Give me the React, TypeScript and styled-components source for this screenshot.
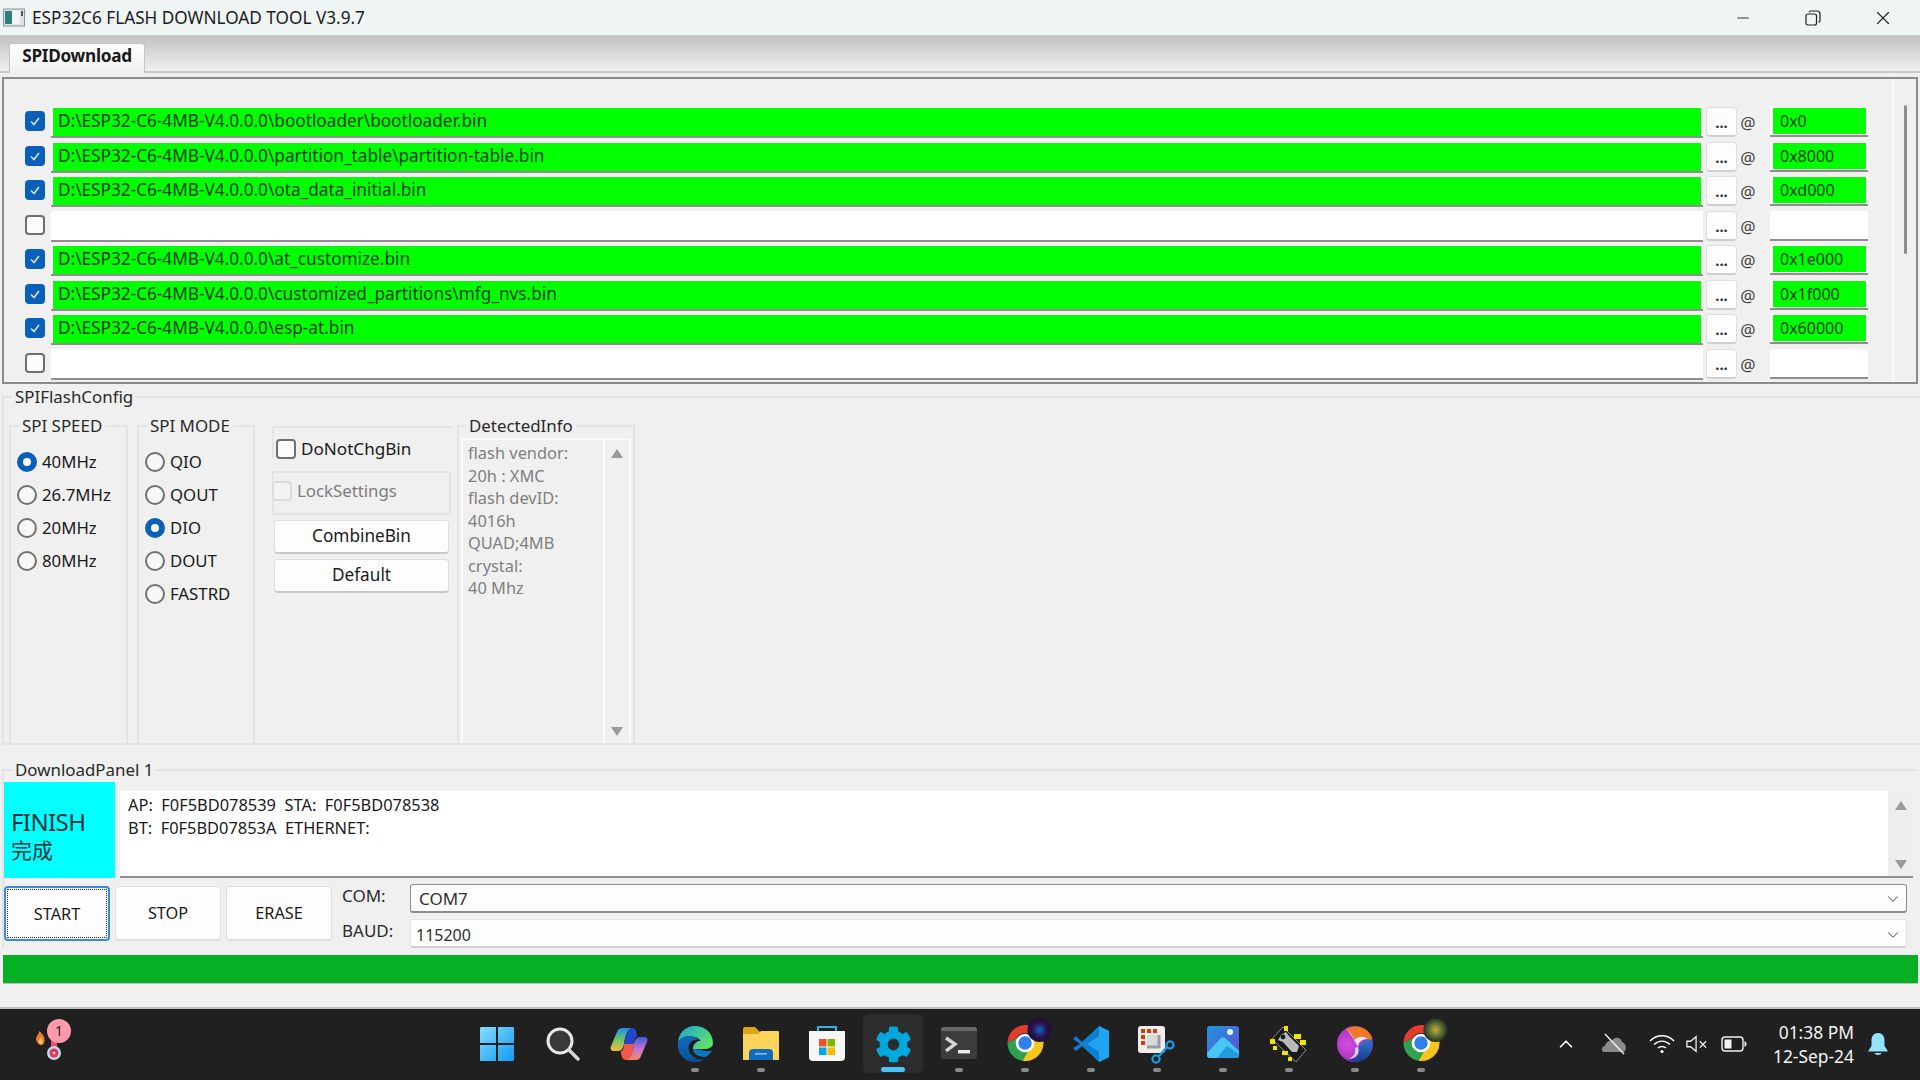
import React from "react";
import styled, { createGlobalStyle } from "styled-components";
import { ChevronDown, ChevronUp, Minus, X } from "lucide-react";
import { FaCog } from "react-icons/fa";

const UI_FONT = `"Noto Sans", "Noto Sans CJK SC", sans-serif`;

const GlobalStyle = createGlobalStyle`
  html, body { margin: 0; padding: 0; background: #f0f0f0; }
  * { box-sizing: border-box; }
  body { font-family: ${UI_FONT}; color: #1a1a1a; }
`;

const Screen = styled.div`
  width: 1920px;
  height: 1080px;
  display: flex;
  flex-direction: column;
  overflow: hidden;
`;

const Window = styled.div`
  height: 1009px;
  display: flex;
  flex-direction: column;
  background: #f0f0f0;
  border-bottom: 2px solid #bdbdbd;
`;

const TitleBar = styled.div`
  height: 36px;
  flex: none;
  display: flex;
  align-items: center;
  padding-left: 3px;
  background: #eff4f4;
  border-bottom: 1px solid #c9c9c9;
`;

const Title = styled.span`
  margin-left: 7px;
  font-size: 17.2px;
  color: #1c1c1c;
  white-space: nowrap;
`;

const WinControls = styled.div`
  margin-left: auto;
  margin-right: 2px;
  display: flex;
  height: 100%;
`;

const WinControl = styled.div`
  width: 70px;
  display: flex;
  align-items: center;
  justify-content: center;
  color: #222;
`;

const TabStrip = styled.div`
  height: 37px;
  flex: none;
  margin-bottom: 4px;
  padding-left: 9px;
  display: flex;
  align-items: flex-end;
  background: linear-gradient(#c2c2c2, #f0f0f0);
  border-bottom: 2px solid #c8c8c8;
`;

const Tab = styled.div`
  width: 136px;
  height: 30px;
  margin-bottom: -2px;
  background: linear-gradient(#ffffff, #f1f1f1);
  border: 1px solid #c4c4c4;
  border-bottom: none;
  border-radius: 3px 3px 0 0;
  font-size: 17.2px;
  font-weight: 700;
  text-align: center;
  line-height: 24px;
  letter-spacing: -0.3px;
`;

const FilePanel = styled.div`
  height: 307px;
  flex: none;
  margin: 0 2px 0 2px;
  display: flex;
  background: #f0f0f0;
  border: 2px solid #8c8c8c;
  overflow: hidden;
`;

const FileRows = styled.div`
  flex: 1;
  min-width: 0;
  padding: 28px 0 0 21px;
`;

const FileRow = styled.div`
  height: 34.5px;
  display: flex;
  align-items: flex-start;
`;

const CheckBox = styled.span<{ $checked?: boolean; $disabled?: boolean }>`
  flex: none;
  width: 20px;
  height: 20px;
  display: flex;
  align-items: center;
  justify-content: center;
  border-radius: 4px;
  background: ${(p) => (p.$checked ? "#0a5fb8" : p.$disabled ? "#f3f3f3" : "#fbfbfb")};
  border: 2px solid ${(p) => (p.$checked ? "#0a5fb8" : p.$disabled ? "#dcdcdc" : "#6f6f6f")};
`;

const RowCheck = styled(CheckBox)`
  margin-top: 4px;
`;

const PathField = styled.div`
  width: 1652px;
  height: 31px;
  margin-left: 6px;
  padding: 1px 2px 0 2px;
  background: #ffffff;
  border-bottom: 2px solid #8e8e8e;
`;

const FieldFill = styled.div<{ $ok?: boolean }>`
  height: 28px;
  padding-left: 5px;
  background: ${(p) => (p.$ok ? "#00ff00" : "#ffffff")};
  font-size: 17.2px;
  line-height: 25px;
  color: #0d3d0d;
  white-space: nowrap;
`;

const DotsButton = styled.div`
  width: 31px;
  height: 30px;
  flex: none;
  margin-left: 3px;
  background: #fdfdfd;
  border: 1px solid #dedede;
  border-bottom: 2px solid #cfcfcf;
  border-radius: 4px;
  text-align: center;
  font-size: 15px;
  font-weight: 700;
  line-height: 29px;
  color: #333;
`;

const AtSign = styled.span`
  width: 22px;
  flex: none;
  padding-top: 4px;
  text-align: center;
  font-size: 17px;
  line-height: 24px;
  color: #444;
`;

const OffsetField = styled.div`
  width: 98px;
  height: 30px;
  margin-left: 11px;
  padding: 1px 2px 0 3px;
  background: #fff;
  border-bottom: 2px solid #8e8e8e;
`;

const OffsetFill = styled.div<{ $ok?: boolean }>`
  height: 26px;
  padding-left: 7px;
  background: ${(p) => (p.$ok ? "#00ff00" : "#ffffff")};
  font-size: 16px;
  line-height: 26px;
  color: #0d3d0d;
`;

const PanelScroll = styled.div`
  width: 24px;
  flex: none;
  border-left: 2px solid #fbfbfb;
  display: flex;
  justify-content: center;
`;

const PanelThumb = styled.div`
  width: 3px;
  height: 149px;
  margin-top: 26px;
  background: #8e8e8e;
  border-radius: 2px;
`;

const Group = styled.fieldset`
  margin: 0;
  padding: 0;
  min-width: 0;
  border: 2px solid #e4e4e4;
`;

const Legend = styled.legend<{ $indent?: number }>`
  margin-left: ${(p) => p.$indent ?? 8}px;
  padding: 0 3px;
  font-size: 16.9px;
  line-height: 24px;
  color: #2a2a2a;
  white-space: nowrap;
`;

const ConfigGroup = styled(Group)`
  height: 360px;
  flex: none;
  margin: 1px 0 0 2px;
  border-right: none;
`;

const ConfigBody = styled.div`
  display: flex;
  align-items: flex-start;
  padding: 5px 0 0 5px;
`;

const OptionGroup = styled(Group)<{ $w: number; $mr: number }>`
  width: ${(p) => p.$w}px;
  height: 329px;
  margin-right: ${(p) => p.$mr}px;
  flex: none;
  border-bottom: none;
  padding: 7px 0 0 6px;
`;

const RadioRow = styled.div`
  height: 33px;
  display: flex;
  align-items: center;
  gap: 5px;
  font-size: 16.8px;
`;

const Radio = styled.span<{ $on?: boolean }>`
  width: 20px;
  height: 20px;
  flex: none;
  border-radius: 50%;
  background: #f8f8f8;
  border: ${(p) => (p.$on ? "6px solid #0a5fb8" : "2px solid #707070")};
`;

const ActionColumn = styled.div`
  width: 179px;
  height: 329px;
  flex: none;
  margin: 12px 6px 0 0;
`;

const ChgFrame = styled.div`
  height: 32px;
  padding: 11px 0 0 2px;
  display: flex;
  align-items: flex-start;
  gap: 5px;
  border-top: 2px solid #e4e4e4;
  border-left: 2px solid #e4e4e4;
  font-size: 17.1px;
  line-height: 20px;
`;

const LockFrame = styled.div`
  height: 44px;
  margin-top: 13px;
  display: flex;
  align-items: center;
  gap: 5px;
  padding-bottom: 5px;
  border: 2px solid #e4e4e4;
  font-size: 16.8px;
  color: #7d7d7d;
`;

const LockCheck = styled(CheckBox)`
  margin-left: -2px;
`;

const WideButton = styled.div`
  width: 175px;
  height: 34px;
  margin: 5px 0 0 2px;
  background: #fdfdfd;
  border: 1px solid #dedede;
  border-bottom: 2px solid #c8c8c8;
  border-radius: 4px;
  text-align: center;
  font-size: 17.2px;
  line-height: 30px;
`;

const DetectedGroup = styled(Group)`
  width: 178px;
  height: 329px;
  flex: none;
  border-bottom: none;
  padding: 0 2px;
`;

const DetectedBox = styled.div`
  height: 305px;
  display: flex;
  border: 2px solid #fafafa;
  border-bottom: none;
`;

const DetectedText = styled.div`
  flex: 1;
  padding: 2px 0 0 5px;
  font-size: 16.4px;
  line-height: 22.5px;
  color: #7f7f7f;
  white-space: pre;
`;

const ScrollColumn = styled.div<{ $w: number; $top: number; $bottom: number }>`
  width: ${(p) => p.$w}px;
  flex: none;
  padding: ${(p) => p.$top}px 0 ${(p) => p.$bottom}px;
  display: flex;
  flex-direction: column;
  align-items: center;
  justify-content: space-between;
  background: #eeeeee;
`;

const DetectedScroll = styled(ScrollColumn)`
  border-left: 2px solid #fafafa;
  background: #f0f0f0;
`;

const Arrow = styled.span<{ $down?: boolean }>`
  width: 0;
  height: 0;
  border-left: 6px solid transparent;
  border-right: 6px solid transparent;
  ${(p) =>
    p.$down ? "border-top: 9px solid #9a9a9a;" : "border-bottom: 9px solid #9a9a9a;"}
`;

const DownloadGroup = styled(Group)`
  height: 189px;
  flex: none;
  margin: 13px 3px 0 2px;
  border-width: 2px 0 0 2px;
`;

const StatusRow = styled.div`
  display: flex;
  height: 96px;
`;

const StatusCell = styled.div`
  width: 111px;
  flex: none;
  padding: 24px 0 0 7px;
  background: #00ffff;
  color: #16333a;
`;

const StatusEn = styled.div`
  font-size: 24px;
  line-height: 31px;
  letter-spacing: -0.6px;
`;

const StatusCn = styled.div`
  font-size: 21px;
  line-height: 27px;
`;

const LogBox = styled.div`
  flex: 1;
  margin: 9px 4px 0 5px;
  display: flex;
  background: #fff;
  border-bottom: 2px solid #8e8e8e;
`;

const LogText = styled.div`
  flex: 1;
  padding: 3px 0 0 8px;
  font-size: 16.4px;
  line-height: 22.5px;
  white-space: pre;
`;

const ControlRow = styled.div`
  display: flex;
  margin-top: 6px;
  height: 63px;
`;

const BigButton = styled.div<{ $focus?: boolean }>`
  width: 106px;
  height: 55px;
  margin: 2px 5px 0 0;
  background: #fdfdfd;
  border: ${(p) => (p.$focus ? "2px solid #3b8ad9" : "1px solid #dedede")};
  border-bottom-width: 2px;
  border-radius: 4px;
  display: flex;
  align-items: center;
  justify-content: center;
  font-size: 16.3px;
  ${(p) => (p.$focus ? "outline: 1.5px dotted #333; outline-offset: -4px;" : "")}
`;

const PortLabels = styled.div`
  width: 68px;
  flex: none;
  margin-left: 5px;
  margin-top: -6px;
  font-size: 17px;
  line-height: 35px;
  color: #2a2a2a;
`;

const PortSelects = styled.div`
  width: 1497px;
  flex: none;
`;

const Select = styled.div<{ $focus?: boolean }>`
  height: 29px;
  margin-bottom: 6px;
  padding: ${(p) => (p.$focus ? 1 : 3)}px 4px 0 ${(p) => (p.$focus ? 8 : 5)}px;
  display: flex;
  align-items: center;
  justify-content: space-between;
  background: #fdfdfd;
  border: 1px solid ${(p) => (p.$focus ? "#8c8c8c" : "#e2e2e2")};
  border-bottom: 2px solid ${(p) => (p.$focus ? "#8c8c8c" : "#cfcfcf")};
  border-radius: 3px;
  font-size: ${(p) => (p.$focus ? 17 : 16)}px;
  color: #303030;
`;

const Progress = styled.div`
  height: 29px;
  flex: none;
  margin: 8px 2px 0 3px;
  background: #05b025;
  border-bottom: 1px solid #bdbdbd;
`;

const TaskBar = styled.div`
  height: 71px;
  flex: none;
  display: flex;
  align-items: flex-start;
  padding-top: 5px;
  background: #202020;
`;

const Widget = styled.div`
  width: 464px;
  flex: none;
  padding: 8px 0 0 32px;
`;

const WidgetIcon = styled.div`
  position: relative;
  width: 40px;
  height: 42px;
`;

const WidgetBadge = styled.span`
  position: absolute;
  left: 15px;
  top: -3px;
  width: 24px;
  height: 24px;
  border-radius: 50%;
  background: #ff9aa8;
  color: #222;
  font-size: 14px;
  line-height: 24px;
  text-align: center;
`;

const TaskSlot = styled.div`
  width: 66px;
  height: 59px;
  flex: none;
  display: flex;
  justify-content: center;
`;

const TaskTile = styled.div<{ $active?: boolean }>`
  width: 60px;
  height: 59px;
  padding-top: 12px;
  display: flex;
  flex-direction: column;
  align-items: center;
  border-radius: 6px;
  background: ${(p) => (p.$active ? "#2c2c2c" : "transparent")};
`;

const Pill = styled.span<{ $kind: "none" | "open" | "active" }>`
  margin-top: auto;
  margin-bottom: 1px;
  height: ${(p) => (p.$kind === "active" ? 5 : 4)}px;
  width: ${(p) => (p.$kind === "active" ? 24 : 8)}px;
  border-radius: 3px;
  background: ${(p) =>
    p.$kind === "active" ? "#4cc2ff" : p.$kind === "open" ? "#8a8a8a" : "transparent"};
`;

const Tray = styled.div`
  display: flex;
  align-items: center;
  height: 59px;
  margin-left: 88px;
  color: #fff;
`;

const TraySlot = styled.div<{ $w: number }>`
  width: ${(p) => p.$w}px;
  display: flex;
  justify-content: center;
  align-items: center;
`;

const Clock = styled.div`
  width: 94px;
  text-align: right;
  font-size: 17.4px;
  line-height: 24px;
  color: #f4f4f4;
  white-space: nowrap;
`;

const files = [
  { path: "D:\\ESP32-C6-4MB-V4.0.0.0\\bootloader\\bootloader.bin", addr: "0x0" },
  { path: "D:\\ESP32-C6-4MB-V4.0.0.0\\partition_table\\partition-table.bin", addr: "0x8000" },
  { path: "D:\\ESP32-C6-4MB-V4.0.0.0\\ota_data_initial.bin", addr: "0xd000" },
  { path: "", addr: "" },
  { path: "D:\\ESP32-C6-4MB-V4.0.0.0\\at_customize.bin", addr: "0x1e000" },
  { path: "D:\\ESP32-C6-4MB-V4.0.0.0\\customized_partitions\\mfg_nvs.bin", addr: "0x1f000" },
  { path: "D:\\ESP32-C6-4MB-V4.0.0.0\\esp-at.bin", addr: "0x60000" },
  { path: "", addr: "" },
];

const speeds = ["40MHz", "26.7MHz", "20MHz", "80MHz"];
const modes = ["QIO", "QOUT", "DIO", "DOUT", "FASTRD"];

const Tick = () => (
  <svg width="12" height="12" viewBox="0 0 12 12">
    <path d="M2 6.5 L5 9.5 L10 3" fill="none" stroke="#d8e8f8" strokeWidth="1.5" />
  </svg>
);

const AppIcon = () => (
  <svg width="22" height="20" viewBox="0 0 22 20">
    <rect x="0.5" y="1" width="21" height="17" fill="#dfe3e6" stroke="#8d9499" />
    <rect x="2" y="3" width="7" height="13" fill="#2d7f7a" />
    <rect x="9" y="3" width="8" height="13" fill="#f5f5f5" />
    <rect x="18" y="3" width="2" height="5" fill="#555" />
  </svg>
);

const RestoreIcon = () => (
  <svg width="16" height="16" viewBox="0 0 16 16" fill="none" stroke="#222" strokeWidth="1.2">
    <rect x="1" y="4" width="10.5" height="11" rx="2" />
    <path d="M4 2.2 C4.5 1.2 5 1 6 1 H12 C14 1 15 2 15 4 V10.5 C15 11.5 14.5 12 13.5 12.4" />
  </svg>
);

const ThermoIcon = () => (
  <svg width="40" height="42" viewBox="0 0 40 42">
    <path d="M5 20 C2 15 7 13 7 9 C11 12 14 16 12 21 C11 24 7 24 5 20Z" fill="#ef7a22" />
    <path d="M7 21 C6 18 8 17 9 15 C11 18 11 22 9 22Z" fill="#ffc36b" />
    <rect x="19" y="10" width="6" height="20" fill="#f04e6a" />
    <circle cx="22" cy="31" r="7" fill="#b6dcf6" />
    <circle cx="22" cy="31" r="4.5" fill="#e8334f" />
    <circle cx="22" cy="31" r="1.5" fill="#ffd5dc" />
  </svg>
);

const StartIcon = () => (
  <svg width="36" height="36" viewBox="0 0 36 36">
    <defs>
      <linearGradient id="st" x1="0" y1="0" x2="1" y2="1">
        <stop offset="0" stopColor="#86dcff" />
        <stop offset="1" stopColor="#0f9bf5" />
      </linearGradient>
    </defs>
    <path d="M2 1 H17 V17 H1 V2 Z M19 1 H34 Q35 1 35 2 V17 H19 Z M1 19 H17 V35 H2 Q1 35 1 34 Z M19 19 H35 V34 Q35 35 34 35 H19 Z" fill="url(#st)" />
  </svg>
);

const SearchIcon = () => (
  <svg width="36" height="36" viewBox="0 0 36 36">
    <circle cx="15" cy="15" r="12" fill="#3a3a3a" stroke="#e8e8e8" strokeWidth="3" />
    <path d="M24 24 L33 33" stroke="#d8d8d8" strokeWidth="3.4" strokeLinecap="round" />
  </svg>
);

const CopilotIcon = () => (
  <svg width="38" height="36" viewBox="0 0 38 36">
    <defs>
      <linearGradient id="co1" x1="0" y1="0" x2="0" y2="1">
        <stop offset="0" stopColor="#1c8df0" />
        <stop offset="0.5" stopColor="#6fc66a" />
        <stop offset="1" stopColor="#f5b83c" />
      </linearGradient>
      <linearGradient id="co2" x1="0" y1="0" x2="0" y2="1">
        <stop offset="0" stopColor="#3a5fe0" />
        <stop offset="0.5" stopColor="#c66fd6" />
        <stop offset="1" stopColor="#f28a5c" />
      </linearGradient>
    </defs>
    <path d="M12 2 H22 C17 4 15 10 14 18 C13 22 12 25 8 25 H4 C1 25 0 23 1 20 L7 6 C8 3 10 2 12 2Z" fill="url(#co1)" />
    <path d="M26 34 H16 C21 32 23 26 24 18 C25 14 26 11 30 11 H34 C37 11 38 13 37 16 L31 30 C30 33 28 34 26 34Z" fill="url(#co2)" />
    <path d="M22 2 C25 2 27 5 27 11 C25 11 24 14 24 18 L14 18 C15 10 17 4 22 2Z" fill="#2248c8" />
    <path d="M16 34 C13 34 11 31 11 25 C13 25 14 22 14 18 L24 18 C23 26 21 32 16 34Z" fill="#ef5a4a" />
  </svg>
);

const EdgeIcon = () => (
  <svg width="36" height="36" viewBox="0 0 36 36">
    <defs>
      <linearGradient id="ed1" x1="0" y1="0" x2="1" y2="0.6">
        <stop offset="0" stopColor="#1ba3d8" />
        <stop offset="1" stopColor="#5fe06a" />
      </linearGradient>
      <linearGradient id="ed2" x1="0" y1="0" x2="0.4" y2="1">
        <stop offset="0" stopColor="#0f6fc2" />
        <stop offset="1" stopColor="#0a4f94" />
      </linearGradient>
    </defs>
    <path d="M1 16 C2 6 9 0 18 0 C28 0 36 7 36 17 C36 21 32 23 27 23 H16 C16 17 22 14 24 15 C20 9 6 8 1 16Z" fill="url(#ed1)" />
    <path d="M1 16 C6 8 18 9 21 14 C15 13 10 18 12 25 C14 31 21 35 28 33 C24 36 20 36 17 36 C7 36 0 27 1 16Z" fill="url(#ed2)" />
    <path d="M16 23 C16 28 22 31 28 31 C31 30 34 27 35 24 C31 26 28 25 24 24Z" fill="#0e77c4" />
  </svg>
);

const FolderIcon = () => (
  <svg width="36" height="36" viewBox="0 0 36 36">
    <path d="M0 3 Q0 1 2 1 H12 L17 6 H36 V34 H0Z" fill="#dca513" />
    <path d="M0 8 H15 L18 5 H35 Q36 5 36 6 V34 H0Z" fill="#fcd45c" />
    <path d="M6 34 V27 Q6 23 10 23 H26 Q30 23 30 27 V34Z" fill="#0f6cbd" />
    <rect x="12" y="27" width="12" height="1.6" fill="#7fc3f2" />
  </svg>
);

const StoreIcon = () => (
  <svg width="36" height="36" viewBox="0 0 36 36">
    <path d="M9 5 V1 H27 V5" fill="none" stroke="#27b4ec" strokeWidth="2" />
    <path d="M0 5 H36 V31 Q36 35 32 35 H4 Q0 35 0 31Z" fill="#f6f6f6" />
    <rect x="10" y="13" width="7.5" height="7.5" fill="#f25022" />
    <rect x="18.5" y="13" width="7.5" height="7.5" fill="#7fba00" />
    <rect x="10" y="21.5" width="7.5" height="7.5" fill="#00a4ef" />
    <rect x="18.5" y="21.5" width="7.5" height="7.5" fill="#ffb900" />
  </svg>
);

const TerminalIcon = () => (
  <svg width="36" height="36" viewBox="0 0 36 36">
    <rect x="0" y="1" width="36" height="32" rx="3" fill="#3c3c3c" />
    <path d="M0 4 Q0 1 3 1 H33 Q36 1 36 4 V5 H0Z" fill="#686868" />
    <path d="M5 12 L14 18 L5 25" fill="none" stroke="#d6d6d6" strokeWidth="3.4" />
    <rect x="17" y="24" width="12" height="3.4" fill="#ececec" />
  </svg>
);

const ChromeSvg = styled.svg`
  overflow: visible;
  margin-top: -1px;
`;

const ChromeIcon = ({ avatar, uid }: { avatar: string; uid: string }) => (
  <ChromeSvg width="48" height="38" viewBox="-4.5 8 48 38">
    <defs>
      <radialGradient id={uid}>
        <stop offset="0" stopColor={avatar === "blue" ? "#1167c4" : "#c9a836"} />
        <stop offset="0.6" stopColor={avatar === "blue" ? "#2a1250" : "#4e6b32"} />
        <stop offset="1" stopColor={avatar === "blue" ? "#1c0e3a" : "#2a2a22"} />
      </radialGradient>
    </defs>
    <path d="M2 26 A18 18 0 0 1 35 16 L20 16 A10 10 0 0 0 11 21Z" fill="#e33b2e" />
    <path d="M2 26 A18 18 0 0 0 17 43.8 L24.5 31 A10 10 0 0 1 11 21 Z" fill="#30a14e" />
    <path d="M35 16 A18 18 0 0 1 17 43.8 L24.5 31 A10 10 0 0 0 27 20Z" fill="#f8c51c" />
    <circle cx="19.5" cy="26" r="8" fill="#2f80ed" stroke="#fff" strokeWidth="2.6" />
    <circle cx="34" cy="13" r="12" fill={`url(#${uid})`} />
  </ChromeSvg>
);

const VsCodeIcon = () => (
  <svg width="36" height="36" viewBox="0 0 36 36">
    <path d="M26 0 L36 5 V31 L26 36 L9 20 L3 25 L0 22 L7 18 L0 13 L3 10 L9 16Z" fill="#0c7fd0" />
    <path d="M26 0 L36 5 V31 L26 36Z M26 10 L14 18 L26 26Z" fill="#1fa4f1" fillRule="evenodd" />
  </svg>
);

const SnipIcon = () => (
  <svg width="38" height="38" viewBox="0 0 38 38">
    <rect x="0" y="0" width="27" height="27" rx="3" fill="#ededed" />
    <g fill="#d83b01">
      <rect x="3" y="3" width="4" height="4" />
      <rect x="9" y="3" width="4" height="4" />
      <rect x="15" y="3" width="4" height="4" />
      <rect x="3" y="9" width="4" height="4" />
      <rect x="3" y="15" width="4" height="4" />
    </g>
    <path d="M9 9 H20 V20 H9Z" fill="#d6dadd" />
    <path d="M21 9 V21 H9" fill="none" stroke="#9a9a9a" strokeWidth="3" />
    <circle cx="32" cy="19" r="3.6" fill="none" stroke="#1a9be0" strokeWidth="2.2" />
    <circle cx="18" cy="33" r="3.6" fill="none" stroke="#1a9be0" strokeWidth="2.2" />
    <path d="M29 21 L21 30" stroke="#1a9be0" strokeWidth="2.2" />
  </svg>
);

const PhotosIcon = () => (
  <svg width="32" height="32" viewBox="0 0 32 32">
    <defs>
      <linearGradient id="ph" x1="0" y1="0" x2="1" y2="1">
        <stop offset="0" stopColor="#2196e0" />
        <stop offset="1" stopColor="#5d4fd0" />
      </linearGradient>
    </defs>
    <rect width="32" height="32" rx="3" fill="url(#ph)" />
    <circle cx="23" cy="6" r="3" fill="#e6f4ff" />
    <path d="M0 27 L14 12 Q16 10.500 18 12 L32 25 V29 Q32 32 29 32 H3 Q0 32 0 29Z" fill="#49c6f3" />
    <path d="M10 32 L20 20 L32 28 V29 Q32 32 29 32Z" fill="#1f9de0" />
  </svg>
);

const ToolIcon = () => (
  <svg width="38" height="38" viewBox="0 0 38 38">
    <path d="M2 13 L13 1 L36 24 L26 36Z" fill="#1a1a1a" stroke="#aaa" strokeWidth="0.8" />
    <path d="M11 9 L16 6 L19 10 L29 20 L27 26 L22 26 L13 16 L8 14Z" fill="#b9b9b9" />
    <circle cx="13" cy="11" r="2.4" fill="#1a1a1a" />
    <g fill="#f5e400">
      <rect x="14" y="0" width="4" height="5" />
      <rect x="24" y="8" width="7" height="5" />
      <rect x="30" y="14" width="6" height="5" />
      <rect x="0" y="13" width="5" height="5" />
      <rect x="3" y="20" width="4" height="4" />
      <rect x="12" y="25" width="6" height="4" />
      <rect x="18" y="31" width="4" height="4" />
    </g>
  </svg>
);

const SwirlIcon = () => (
  <svg width="36" height="36" viewBox="0 0 36 36">
    <defs>
      <radialGradient id="sw1" cx="0.3" cy="0.5" r="0.8">
        <stop offset="0" stopColor="#d24fe0" />
        <stop offset="1" stopColor="#8a1fa8" />
      </radialGradient>
      <linearGradient id="sw2" x1="0" y1="0" x2="0" y2="1">
        <stop offset="0" stopColor="#2f78d0" />
        <stop offset="1" stopColor="#173a8a" />
      </linearGradient>
    </defs>
    <circle cx="18" cy="18" r="18" fill="url(#sw1)" />
    <path d="M9 3 C17 -2 30 0 35 11 C36 14 34 16 31 13 C26 9 20 11 17 14 C15 9 12 6 9 3Z" fill="#ee7a28" />
    <path d="M35 13 C37 24 32 33 23 35.500 C18 36.500 13 35 11 33 C18 34 23 30 22 24 C21 19 26 15 31 14Z" fill="url(#sw2)" />
    <path d="M9 3 C13 6 16 10 17 14 C20 11 26 9 31 13 C25 13 21 16 21 21 C19 18 15 9 9 3Z" fill="#f1ece8" />
    <path d="M21 21 C23 27 19 33 11 33 C17 31 19 27 18 22Z" fill="#cfd8ec" />
  </svg>
);

const taskApps: { key: string; node: React.ReactNode; pill: "none" | "open" | "active" }[] = [
  { key: "start", node: <StartIcon />, pill: "none" },
  { key: "search", node: <SearchIcon />, pill: "none" },
  { key: "copilot", node: <CopilotIcon />, pill: "none" },
  { key: "edge", node: <EdgeIcon />, pill: "open" },
  { key: "folder", node: <FolderIcon />, pill: "open" },
  { key: "store", node: <StoreIcon />, pill: "none" },
  { key: "settings", node: <FaCog size={37} color="#00a8dc" />, pill: "active" },
  { key: "terminal", node: <TerminalIcon />, pill: "open" },
  { key: "chrome1", node: <ChromeIcon avatar="blue" uid="cav1" />, pill: "open" },
  { key: "vscode", node: <VsCodeIcon />, pill: "open" },
  { key: "snip", node: <SnipIcon />, pill: "open" },
  { key: "photos", node: <PhotosIcon />, pill: "open" },
  { key: "tool", node: <ToolIcon />, pill: "open" },
  { key: "swirl", node: <SwirlIcon />, pill: "open" },
  { key: "chrome2", node: <ChromeIcon avatar="green" uid="cav2" />, pill: "open" },
];

const CloudOff = () => (
  <svg width="26" height="22" viewBox="0 0 26 22">
    <path d="M3 19 C0 19 0 13 4 13 C5 8 9 7 11 8 C13 3 20 4 21 9 C26 10 26 19 22 19Z" fill="#8a8a8a" />
    <path d="M4 1 L23 21" stroke="#f2f2f2" strokeWidth="1.4" />
  </svg>
);

const WifiIcon = () => (
  <svg width="26" height="20" viewBox="0 0 26 20" fill="none" stroke="#fff" strokeWidth="1.5">
    <path d="M1 7 C8 0 18 0 25 7" />
    <path d="M5 10.500 C10 6 16 6 21 10.500" />
    <path d="M9 14 C11.500 12 14.500 12 17 14" />
    <circle cx="13" cy="17.500" r="1.600" fill="#fff" stroke="none" />
  </svg>
);

const MuteIcon = () => (
  <svg width="24" height="18" viewBox="0 0 24 18" fill="none" stroke="#f2f2f2" strokeWidth="1.4">
    <path d="M1 6 H5 L11 1 V17 L5 12 H1Z" />
    <path d="M15 6 L22 13 M22 6 L15 13" />
  </svg>
);

const BatteryIcon = () => (
  <svg width="26" height="16" viewBox="0 0 26 16">
    <rect x="1" y="1" width="21" height="14" rx="3" fill="none" stroke="#f2f2f2" strokeWidth="1.4" />
    <rect x="3.500" y="3.500" width="7" height="9" fill="#f2f2f2" />
    <path d="M23.500 5 Q25.500 5.500 25.500 8 Q25.500 10.500 23.500 11Z" fill="#f2f2f2" />
  </svg>
);

const BellIcon = () => (
  <svg width="20" height="24" viewBox="0 0 20 24">
    <path d="M10 1 C5 1 3.500 5 3.500 9 V14 L0.500 18.500 V19.500 H19.500 V18.500 L16.500 14 V9 C16.500 5 15 1 10 1Z" fill="#93e3ff" />
    <path d="M6.500 21 H13.500 C13 23.500 7 23.500 6.500 21Z" fill="#93e3ff" />
  </svg>
);

export default function App() {
  return (
    <Screen>
      <GlobalStyle />
      <Window>
        <TitleBar>
          <AppIcon />
          <Title>ESP32C6 FLASH DOWNLOAD TOOL V3.9.7</Title>
          <WinControls>
            <WinControl>
              <Minus size={18} strokeWidth={1.2} />
            </WinControl>
            <WinControl>
              <RestoreIcon />
            </WinControl>
            <WinControl>
              <X size={22} strokeWidth={1.2} />
            </WinControl>
          </WinControls>
        </TitleBar>

        <TabStrip>
          <Tab>SPIDownload</Tab>
        </TabStrip>

        <FilePanel>
          <FileRows>
            {files.map((f, i) => (
              <FileRow key={i}>
                <RowCheck $checked={!!f.path}>{f.path && <Tick />}</RowCheck>
                <PathField>
                  <FieldFill $ok={!!f.path}>{f.path}</FieldFill>
                </PathField>
                <DotsButton>...</DotsButton>
                <AtSign>@</AtSign>
                <OffsetField>
                  <OffsetFill $ok={!!f.addr}>{f.addr}</OffsetFill>
                </OffsetField>
              </FileRow>
            ))}
          </FileRows>
          <PanelScroll>
            <PanelThumb />
          </PanelScroll>
        </FilePanel>

        <ConfigGroup>
          <Legend>SPIFlashConfig</Legend>
          <ConfigBody>
            <OptionGroup $w={119} $mr={9}>
              <Legend $indent={2}>SPI SPEED</Legend>
              {speeds.map((s, i) => (
                <RadioRow key={s}>
                  <Radio $on={i === 0} />
                  {s}
                </RadioRow>
              ))}
            </OptionGroup>
            <OptionGroup $w={118} $mr={17}>
              <Legend $indent={2}>SPI MODE</Legend>
              {modes.map((m) => (
                <RadioRow key={m}>
                  <Radio $on={m === "DIO"} />
                  {m}
                </RadioRow>
              ))}
            </OptionGroup>
            <ActionColumn>
              <ChgFrame>
                <CheckBox />
                DoNotChgBin
              </ChgFrame>
              <LockFrame>
                <LockCheck $disabled />
                LockSettings
              </LockFrame>
              <WideButton>CombineBin</WideButton>
              <WideButton>Default</WideButton>
            </ActionColumn>
            <DetectedGroup>
              <Legend $indent={5}>DetectedInfo</Legend>
              <DetectedBox>
                <DetectedText>
                  {"flash vendor:\n20h : XMC\nflash devID:\n4016h\nQUAD;4MB\ncrystal:\n40 Mhz"}
                </DetectedText>
                <DetectedScroll $w={26} $top={9} $bottom={7}>
                  <Arrow />
                  <Arrow $down />
                </DetectedScroll>
              </DetectedBox>
            </DetectedGroup>
          </ConfigBody>
        </ConfigGroup>

        <DownloadGroup>
          <Legend>DownloadPanel 1</Legend>
          <StatusRow>
            <StatusCell>
              <StatusEn>FINISH</StatusEn>
              <StatusCn>完成</StatusCn>
            </StatusCell>
            <LogBox>
              <LogText>{"AP:  F0F5BD078539  STA:  F0F5BD078538\nBT:  F0F5BD07853A  ETHERNET:"}</LogText>
              <ScrollColumn $w={25} $top={10} $bottom={7}>
                <Arrow />
                <Arrow $down />
              </ScrollColumn>
            </LogBox>
          </StatusRow>
          <ControlRow>
            <BigButton $focus>START</BigButton>
            <BigButton>STOP</BigButton>
            <BigButton>ERASE</BigButton>
            <PortLabels>
              COM:
              <br />
              BAUD:
            </PortLabels>
            <PortSelects>
              <Select $focus>
                COM7
                <ChevronDown size={18} strokeWidth={1.4} color="#666" />
              </Select>
              <Select>
                115200
                <ChevronDown size={18} strokeWidth={1.4} color="#666" />
              </Select>
            </PortSelects>
          </ControlRow>
        </DownloadGroup>

        <Progress />
      </Window>

      <TaskBar>
        <Widget>
          <WidgetIcon>
            <ThermoIcon />
            <WidgetBadge>1</WidgetBadge>
          </WidgetIcon>
        </Widget>
        {taskApps.map((a) => (
          <TaskSlot key={a.key}>
            <TaskTile $active={a.pill === "active"}>
              {a.node}
              <Pill $kind={a.pill} />
            </TaskTile>
          </TaskSlot>
        ))}
        <Tray>
          <TraySlot $w={48}>
            <ChevronUp size={22} strokeWidth={1.8} color="#fff" />
          </TraySlot>
          <TraySlot $w={48}>
            <CloudOff />
          </TraySlot>
          <TraySlot $w={48}>
            <WifiIcon />
          </TraySlot>
          <TraySlot $w={22}>
            <MuteIcon />
          </TraySlot>
          <TraySlot $w={52}>
            <BatteryIcon />
          </TraySlot>
          <Clock>
            01:38 PM
            <br />
            12-Sep-24
          </Clock>
          <TraySlot $w={48}>
            <BellIcon />
          </TraySlot>
        </Tray>
      </TaskBar>
    </Screen>
  );
}
